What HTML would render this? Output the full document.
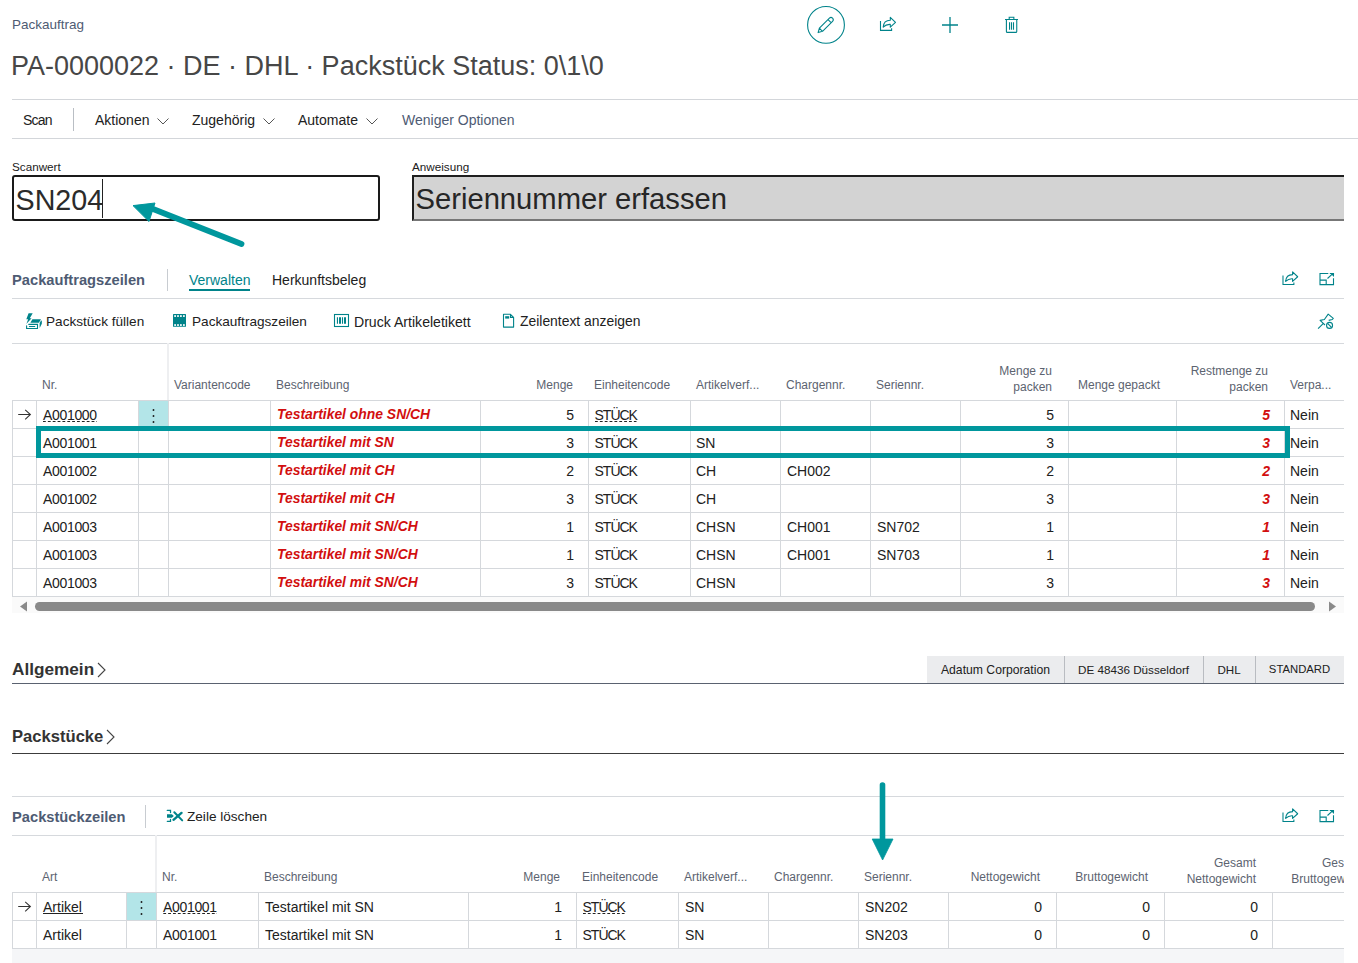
<!DOCTYPE html>
<html><head><meta charset="utf-8"><title>Packauftrag</title>
<style>
html,body{margin:0;padding:0;}
body{width:1358px;height:963px;position:relative;overflow:hidden;background:#fff;font-family:"Liberation Sans",sans-serif;}
.t{position:absolute;white-space:nowrap;}
.r{position:absolute;}
</style></head><body>
<div class="t" style="left:12px;top:17.57px;font-size:13.5px;line-height:13.5px;font-weight:400;color:#4e5b73;font-style:normal;">Packauftrag</div>
<div class="t" style="left:11px;top:53.14px;font-size:27px;line-height:27px;font-weight:400;color:#474747;font-style:normal;">PA-0000022 · DE · DHL · Packstück Status: 0\1\0</div>
<div class="r" style="left:12px;top:99px;width:1346px;height:1px;background:#d3d6da"></div>
<div class="r" style="left:12px;top:138px;width:1346px;height:1px;background:#d3d6da"></div>
<div class="t" style="left:23px;top:113.15px;font-size:14px;line-height:14px;font-weight:400;color:#212121;font-style:normal;letter-spacing:-0.8px;">Scan</div>
<div class="r" style="left:73px;top:108px;width:1px;height:23px;background:#b9bec4"></div>
<div class="t" style="left:95px;top:113.15px;font-size:14px;line-height:14px;font-weight:400;color:#212121;font-style:normal;">Aktionen</div>
<svg class="r" style="left:157px;top:118px;" width="12" height="7" viewBox="0 0 12 7"><path d="M0.5 0.5 L6 6 L11.5 0.5" fill="none" stroke="#555" stroke-width="1"/></svg>
<div class="t" style="left:192px;top:113.15px;font-size:14px;line-height:14px;font-weight:400;color:#212121;font-style:normal;">Zugehörig</div>
<svg class="r" style="left:262.5px;top:118px;" width="12" height="7" viewBox="0 0 12 7"><path d="M0.5 0.5 L6 6 L11.5 0.5" fill="none" stroke="#555" stroke-width="1"/></svg>
<div class="t" style="left:298px;top:113.15px;font-size:14px;line-height:14px;font-weight:400;color:#212121;font-style:normal;">Automate</div>
<svg class="r" style="left:366px;top:118px;" width="12" height="7" viewBox="0 0 12 7"><path d="M0.5 0.5 L6 6 L11.5 0.5" fill="none" stroke="#555" stroke-width="1"/></svg>
<div class="t" style="left:402px;top:113.15px;font-size:14px;line-height:14px;font-weight:400;color:#4e5b73;font-style:normal;">Weniger Optionen</div>
<div class="t" style="left:12px;top:161.10px;font-size:11.7px;line-height:11.7px;font-weight:400;color:#212121;font-style:normal;">Scanwert</div>
<div class="r" style="left:12px;top:175px;width:368px;height:46px;box-sizing:border-box;border:2px solid #1a1a1a;border-radius:3px;background:#fff"></div>
<div class="t" style="left:15.5px;top:185.51px;font-size:28.7px;line-height:28.7px;font-weight:400;color:#2b2b2b;font-style:normal;">SN204</div>
<div class="r" style="left:102px;top:179px;width:1px;height:39px;background:#222"></div>
<div class="t" style="left:412px;top:161.10px;font-size:11.7px;line-height:11.7px;font-weight:400;color:#212121;font-style:normal;">Anweisung</div>
<div class="r" style="left:412px;top:175px;width:932px;height:46px;box-sizing:border-box;border-top:2px solid #1f1f1f;border-left:2px solid #1f1f1f;border-bottom:2px solid #777;background:#d3d3d3"></div>
<div class="t" style="left:415.5px;top:185.08px;font-size:29.2px;line-height:29.2px;font-weight:400;color:#262626;font-style:normal;">Seriennummer erfassen</div>
<div class="t" style="left:12px;top:272.56px;font-size:14.7px;line-height:14.7px;font-weight:700;color:#4e5b73;font-style:normal;">Packauftragszeilen</div>
<div class="r" style="left:167px;top:269px;width:1px;height:22px;background:#c8ccd1"></div>
<div class="t" style="left:189px;top:273.15px;font-size:14px;line-height:14px;font-weight:400;color:#00838a;font-style:normal;">Verwalten</div>
<div class="r" style="left:189px;top:289px;width:61px;height:2px;background:#00838a"></div>
<div class="t" style="left:272px;top:273.15px;font-size:14px;line-height:14px;font-weight:400;color:#212121;font-style:normal;">Herkunftsbeleg</div>
<div class="r" style="left:12px;top:298px;width:1332px;height:1px;background:#d6d9dd"></div>
<div class="t" style="left:46px;top:315.49px;font-size:13.6px;line-height:13.6px;font-weight:400;color:#212121;font-style:normal;">Packstück füllen</div>
<div class="t" style="left:192px;top:315.49px;font-size:13.6px;line-height:13.6px;font-weight:400;color:#212121;font-style:normal;">Packauftragszeilen</div>
<div class="t" style="left:354px;top:315.06px;font-size:14.1px;line-height:14.1px;font-weight:400;color:#212121;font-style:normal;">Druck Artikeletikett</div>
<div class="t" style="left:520px;top:315.23px;font-size:13.9px;line-height:13.9px;font-weight:400;color:#212121;font-style:normal;">Zeilentext anzeigen</div>
<div class="r" style="left:12px;top:343px;width:1332px;height:1px;background:#d6d9dd"></div>
<div class="r" style="left:167px;top:343px;width:2px;height:57px;background:#eeeff1"></div>
<div class="r" style="left:12px;top:400px;width:1332px;height:1px;background:#d5d8dc"></div>
<div class="r" style="left:12px;top:428px;width:1332px;height:1px;background:#d5d8dc"></div>
<div class="r" style="left:12px;top:456px;width:1332px;height:1px;background:#d5d8dc"></div>
<div class="r" style="left:12px;top:484px;width:1332px;height:1px;background:#d5d8dc"></div>
<div class="r" style="left:12px;top:512px;width:1332px;height:1px;background:#d5d8dc"></div>
<div class="r" style="left:12px;top:540px;width:1332px;height:1px;background:#d5d8dc"></div>
<div class="r" style="left:12px;top:568px;width:1332px;height:1px;background:#d5d8dc"></div>
<div class="r" style="left:12px;top:596px;width:1332px;height:1px;background:#d5d8dc"></div>
<div class="r" style="left:12px;top:400px;width:1px;height:196px;background:#d5d8dc"></div>
<div class="r" style="left:36px;top:400px;width:1px;height:196px;background:#d5d8dc"></div>
<div class="r" style="left:138px;top:400px;width:1px;height:196px;background:#d5d8dc"></div>
<div class="r" style="left:168px;top:400px;width:1px;height:196px;background:#d5d8dc"></div>
<div class="r" style="left:270px;top:400px;width:1px;height:196px;background:#d5d8dc"></div>
<div class="r" style="left:480px;top:400px;width:1px;height:196px;background:#d5d8dc"></div>
<div class="r" style="left:588px;top:400px;width:1px;height:196px;background:#d5d8dc"></div>
<div class="r" style="left:690px;top:400px;width:1px;height:196px;background:#d5d8dc"></div>
<div class="r" style="left:780px;top:400px;width:1px;height:196px;background:#d5d8dc"></div>
<div class="r" style="left:870px;top:400px;width:1px;height:196px;background:#d5d8dc"></div>
<div class="r" style="left:960px;top:400px;width:1px;height:196px;background:#d5d8dc"></div>
<div class="r" style="left:1068px;top:400px;width:1px;height:196px;background:#d5d8dc"></div>
<div class="r" style="left:1176px;top:400px;width:1px;height:196px;background:#d5d8dc"></div>
<div class="r" style="left:1284px;top:400px;width:1px;height:196px;background:#d5d8dc"></div>
<div class="t" style="left:42px;top:378.84px;font-size:12px;line-height:12px;font-weight:400;color:#5c6370;font-style:normal;">Nr.</div>
<div class="t" style="left:174px;top:378.84px;font-size:12px;line-height:12px;font-weight:400;color:#5c6370;font-style:normal;">Variantencode</div>
<div class="t" style="left:276px;top:378.84px;font-size:12px;line-height:12px;font-weight:400;color:#5c6370;font-style:normal;">Beschreibung</div>
<div class="t" style="right:785px;top:378.84px;font-size:12px;line-height:12px;font-weight:400;color:#5c6370;font-style:normal;text-align:right;">Menge</div>
<div class="t" style="left:594px;top:378.84px;font-size:12px;line-height:12px;font-weight:400;color:#5c6370;font-style:normal;">Einheitencode</div>
<div class="t" style="left:696px;top:378.84px;font-size:12px;line-height:12px;font-weight:400;color:#5c6370;font-style:normal;">Artikelverf...</div>
<div class="t" style="left:786px;top:378.84px;font-size:12px;line-height:12px;font-weight:400;color:#5c6370;font-style:normal;">Chargennr.</div>
<div class="t" style="left:876px;top:378.84px;font-size:12px;line-height:12px;font-weight:400;color:#5c6370;font-style:normal;">Seriennr.</div>
<div class="t" style="right:306px;top:364.84px;font-size:12px;line-height:12px;font-weight:400;color:#5c6370;font-style:normal;text-align:right;">Menge zu</div>
<div class="t" style="right:306px;top:380.84px;font-size:12px;line-height:12px;font-weight:400;color:#5c6370;font-style:normal;text-align:right;">packen</div>
<div class="t" style="left:1078px;top:378.84px;font-size:12px;line-height:12px;font-weight:400;color:#5c6370;font-style:normal;">Menge gepackt</div>
<div class="t" style="right:90px;top:364.84px;font-size:12px;line-height:12px;font-weight:400;color:#5c6370;font-style:normal;text-align:right;">Restmenge zu</div>
<div class="t" style="right:90px;top:380.84px;font-size:12px;line-height:12px;font-weight:400;color:#5c6370;font-style:normal;text-align:right;">packen</div>
<div class="t" style="left:1290px;top:378.84px;font-size:12px;line-height:12px;font-weight:400;color:#5c6370;font-style:normal;">Verpa...</div>
<div class="r" style="left:139px;top:401px;width:29px;height:27px;background:#b3e5e8"></div>
<div class="t" style="left:43px;top:408.15px;font-size:14px;line-height:14px;font-weight:400;color:#212121;font-style:normal;letter-spacing:-0.33px;">A001000</div>
<div class="t" style="left:277px;top:408.23px;font-size:13.9px;line-height:13.9px;font-weight:700;color:#d20f0f;font-style:italic;">Testartikel ohne SN/CH</div>
<div class="t" style="right:784px;top:408.15px;font-size:14px;line-height:14px;font-weight:400;color:#212121;font-style:normal;text-align:right;">5</div>
<div class="t" style="left:594.5px;top:408.15px;font-size:14px;line-height:14px;font-weight:400;color:#212121;font-style:normal;letter-spacing:-1px;">STÜCK</div>
<div class="t" style="right:304px;top:408.15px;font-size:14px;line-height:14px;font-weight:400;color:#212121;font-style:normal;text-align:right;">5</div>
<div class="t" style="right:88px;top:408.15px;font-size:14px;line-height:14px;font-weight:700;color:#d20f0f;font-style:italic;text-align:right;">5</div>
<div class="t" style="left:1290px;top:408.15px;font-size:14px;line-height:14px;font-weight:400;color:#212121;font-style:normal;">Nein</div>
<div class="t" style="left:43px;top:436.15px;font-size:14px;line-height:14px;font-weight:400;color:#212121;font-style:normal;letter-spacing:-0.33px;">A001001</div>
<div class="t" style="left:277px;top:436.23px;font-size:13.9px;line-height:13.9px;font-weight:700;color:#d20f0f;font-style:italic;">Testartikel mit SN</div>
<div class="t" style="right:784px;top:436.15px;font-size:14px;line-height:14px;font-weight:400;color:#212121;font-style:normal;text-align:right;">3</div>
<div class="t" style="left:594.5px;top:436.15px;font-size:14px;line-height:14px;font-weight:400;color:#212121;font-style:normal;letter-spacing:-1px;">STÜCK</div>
<div class="t" style="left:696px;top:436.15px;font-size:14px;line-height:14px;font-weight:400;color:#212121;font-style:normal;">SN</div>
<div class="t" style="right:304px;top:436.15px;font-size:14px;line-height:14px;font-weight:400;color:#212121;font-style:normal;text-align:right;">3</div>
<div class="t" style="right:88px;top:436.15px;font-size:14px;line-height:14px;font-weight:700;color:#d20f0f;font-style:italic;text-align:right;">3</div>
<div class="t" style="left:1290px;top:436.15px;font-size:14px;line-height:14px;font-weight:400;color:#212121;font-style:normal;">Nein</div>
<div class="t" style="left:43px;top:464.15px;font-size:14px;line-height:14px;font-weight:400;color:#212121;font-style:normal;letter-spacing:-0.33px;">A001002</div>
<div class="t" style="left:277px;top:464.23px;font-size:13.9px;line-height:13.9px;font-weight:700;color:#d20f0f;font-style:italic;">Testartikel mit CH</div>
<div class="t" style="right:784px;top:464.15px;font-size:14px;line-height:14px;font-weight:400;color:#212121;font-style:normal;text-align:right;">2</div>
<div class="t" style="left:594.5px;top:464.15px;font-size:14px;line-height:14px;font-weight:400;color:#212121;font-style:normal;letter-spacing:-1px;">STÜCK</div>
<div class="t" style="left:696px;top:464.15px;font-size:14px;line-height:14px;font-weight:400;color:#212121;font-style:normal;">CH</div>
<div class="t" style="left:787px;top:464.15px;font-size:14px;line-height:14px;font-weight:400;color:#212121;font-style:normal;">CH002</div>
<div class="t" style="right:304px;top:464.15px;font-size:14px;line-height:14px;font-weight:400;color:#212121;font-style:normal;text-align:right;">2</div>
<div class="t" style="right:88px;top:464.15px;font-size:14px;line-height:14px;font-weight:700;color:#d20f0f;font-style:italic;text-align:right;">2</div>
<div class="t" style="left:1290px;top:464.15px;font-size:14px;line-height:14px;font-weight:400;color:#212121;font-style:normal;">Nein</div>
<div class="t" style="left:43px;top:492.15px;font-size:14px;line-height:14px;font-weight:400;color:#212121;font-style:normal;letter-spacing:-0.33px;">A001002</div>
<div class="t" style="left:277px;top:492.23px;font-size:13.9px;line-height:13.9px;font-weight:700;color:#d20f0f;font-style:italic;">Testartikel mit CH</div>
<div class="t" style="right:784px;top:492.15px;font-size:14px;line-height:14px;font-weight:400;color:#212121;font-style:normal;text-align:right;">3</div>
<div class="t" style="left:594.5px;top:492.15px;font-size:14px;line-height:14px;font-weight:400;color:#212121;font-style:normal;letter-spacing:-1px;">STÜCK</div>
<div class="t" style="left:696px;top:492.15px;font-size:14px;line-height:14px;font-weight:400;color:#212121;font-style:normal;">CH</div>
<div class="t" style="right:304px;top:492.15px;font-size:14px;line-height:14px;font-weight:400;color:#212121;font-style:normal;text-align:right;">3</div>
<div class="t" style="right:88px;top:492.15px;font-size:14px;line-height:14px;font-weight:700;color:#d20f0f;font-style:italic;text-align:right;">3</div>
<div class="t" style="left:1290px;top:492.15px;font-size:14px;line-height:14px;font-weight:400;color:#212121;font-style:normal;">Nein</div>
<div class="t" style="left:43px;top:520.15px;font-size:14px;line-height:14px;font-weight:400;color:#212121;font-style:normal;letter-spacing:-0.33px;">A001003</div>
<div class="t" style="left:277px;top:520.23px;font-size:13.9px;line-height:13.9px;font-weight:700;color:#d20f0f;font-style:italic;">Testartikel mit SN/CH</div>
<div class="t" style="right:784px;top:520.15px;font-size:14px;line-height:14px;font-weight:400;color:#212121;font-style:normal;text-align:right;">1</div>
<div class="t" style="left:594.5px;top:520.15px;font-size:14px;line-height:14px;font-weight:400;color:#212121;font-style:normal;letter-spacing:-1px;">STÜCK</div>
<div class="t" style="left:696px;top:520.15px;font-size:14px;line-height:14px;font-weight:400;color:#212121;font-style:normal;">CHSN</div>
<div class="t" style="left:787px;top:520.15px;font-size:14px;line-height:14px;font-weight:400;color:#212121;font-style:normal;">CH001</div>
<div class="t" style="left:877px;top:520.15px;font-size:14px;line-height:14px;font-weight:400;color:#212121;font-style:normal;">SN702</div>
<div class="t" style="right:304px;top:520.15px;font-size:14px;line-height:14px;font-weight:400;color:#212121;font-style:normal;text-align:right;">1</div>
<div class="t" style="right:88px;top:520.15px;font-size:14px;line-height:14px;font-weight:700;color:#d20f0f;font-style:italic;text-align:right;">1</div>
<div class="t" style="left:1290px;top:520.15px;font-size:14px;line-height:14px;font-weight:400;color:#212121;font-style:normal;">Nein</div>
<div class="t" style="left:43px;top:548.15px;font-size:14px;line-height:14px;font-weight:400;color:#212121;font-style:normal;letter-spacing:-0.33px;">A001003</div>
<div class="t" style="left:277px;top:548.23px;font-size:13.9px;line-height:13.9px;font-weight:700;color:#d20f0f;font-style:italic;">Testartikel mit SN/CH</div>
<div class="t" style="right:784px;top:548.15px;font-size:14px;line-height:14px;font-weight:400;color:#212121;font-style:normal;text-align:right;">1</div>
<div class="t" style="left:594.5px;top:548.15px;font-size:14px;line-height:14px;font-weight:400;color:#212121;font-style:normal;letter-spacing:-1px;">STÜCK</div>
<div class="t" style="left:696px;top:548.15px;font-size:14px;line-height:14px;font-weight:400;color:#212121;font-style:normal;">CHSN</div>
<div class="t" style="left:787px;top:548.15px;font-size:14px;line-height:14px;font-weight:400;color:#212121;font-style:normal;">CH001</div>
<div class="t" style="left:877px;top:548.15px;font-size:14px;line-height:14px;font-weight:400;color:#212121;font-style:normal;">SN703</div>
<div class="t" style="right:304px;top:548.15px;font-size:14px;line-height:14px;font-weight:400;color:#212121;font-style:normal;text-align:right;">1</div>
<div class="t" style="right:88px;top:548.15px;font-size:14px;line-height:14px;font-weight:700;color:#d20f0f;font-style:italic;text-align:right;">1</div>
<div class="t" style="left:1290px;top:548.15px;font-size:14px;line-height:14px;font-weight:400;color:#212121;font-style:normal;">Nein</div>
<div class="t" style="left:43px;top:576.15px;font-size:14px;line-height:14px;font-weight:400;color:#212121;font-style:normal;letter-spacing:-0.33px;">A001003</div>
<div class="t" style="left:277px;top:576.23px;font-size:13.9px;line-height:13.9px;font-weight:700;color:#d20f0f;font-style:italic;">Testartikel mit SN/CH</div>
<div class="t" style="right:784px;top:576.15px;font-size:14px;line-height:14px;font-weight:400;color:#212121;font-style:normal;text-align:right;">3</div>
<div class="t" style="left:594.5px;top:576.15px;font-size:14px;line-height:14px;font-weight:400;color:#212121;font-style:normal;letter-spacing:-1px;">STÜCK</div>
<div class="t" style="left:696px;top:576.15px;font-size:14px;line-height:14px;font-weight:400;color:#212121;font-style:normal;">CHSN</div>
<div class="t" style="right:304px;top:576.15px;font-size:14px;line-height:14px;font-weight:400;color:#212121;font-style:normal;text-align:right;">3</div>
<div class="t" style="right:88px;top:576.15px;font-size:14px;line-height:14px;font-weight:700;color:#d20f0f;font-style:italic;text-align:right;">3</div>
<div class="t" style="left:1290px;top:576.15px;font-size:14px;line-height:14px;font-weight:400;color:#212121;font-style:normal;">Nein</div>
<div class="r" style="left:36px;top:426px;width:1254px;height:32px;box-sizing:border-box;border:5px solid #00979d"></div>
<div class="r" style="left:12px;top:597px;width:1332px;height:16px;background:#fafafa"></div>
<svg class="r" style="left:19px;top:601px;" width="9" height="11" viewBox="0 0 9 11"><path d="M8 0.5 V10.5 L1 5.5 Z" fill="#8a8a8a"/></svg>
<div class="r" style="left:35px;top:602px;width:1280px;height:9px;background:#898989;border-radius:4.5px"></div>
<svg class="r" style="left:1328px;top:601px;" width="9" height="11" viewBox="0 0 9 11"><path d="M1 0.5 V10.5 L8 5.5 Z" fill="#8a8a8a"/></svg>
<div class="t" style="left:12px;top:661.44px;font-size:17.2px;line-height:17.2px;font-weight:700;color:#333;font-style:normal;">Allgemein</div>
<svg class="r" style="left:96px;top:662px;" width="12" height="16" viewBox="0 0 12 16"><path d="M2 1 L9 8 L2 15" fill="none" stroke="#444" stroke-width="1.1"/></svg>
<div class="r" style="left:12px;top:683px;width:1332px;height:1px;background:#5a6270"></div>
<div class="r" style="left:927px;top:656px;width:417px;height:27px;background:#ebecee"></div>
<div class="r" style="left:1064px;top:656px;width:1px;height:27px;background:#b9bcc1"></div>
<div class="r" style="left:1203px;top:656px;width:1px;height:27px;background:#b9bcc1"></div>
<div class="r" style="left:1255px;top:656px;width:1px;height:27px;background:#b9bcc1"></div>
<div class="t" style="left:927px;width:137px;top:663.67px;font-size:12.2px;line-height:12.2px;color:#212121;text-align:center">Adatum Corporation</div>
<div class="t" style="left:1064px;width:139px;top:664.10px;font-size:11.7px;line-height:11.7px;color:#212121;text-align:center">DE 48436 Düsseldorf</div>
<div class="t" style="left:1203px;width:52px;top:664.18px;font-size:11.6px;line-height:11.6px;color:#212121;text-align:center">DHL</div>
<div class="t" style="left:1255px;width:89px;top:664.43px;font-size:11.3px;line-height:11.3px;color:#212121;text-align:center">STANDARD</div>
<div class="t" style="left:12px;top:728.95px;font-size:16.6px;line-height:16.6px;font-weight:700;color:#333;font-style:normal;">Packstücke</div>
<svg class="r" style="left:104.5px;top:729px;" width="12" height="16" viewBox="0 0 12 16"><path d="M2 1 L9 8 L2 15" fill="none" stroke="#444" stroke-width="1.1"/></svg>
<div class="r" style="left:12px;top:753px;width:1332px;height:1px;background:#3c3c3c"></div>
<div class="r" style="left:12px;top:796px;width:1332px;height:1px;background:#d6d9dd"></div>
<div class="t" style="left:12px;top:809.56px;font-size:14.7px;line-height:14.7px;font-weight:700;color:#4e5b73;font-style:normal;">Packstückzeilen</div>
<div class="r" style="left:145px;top:805px;width:1px;height:23px;background:#c8ccd1"></div>
<div class="t" style="left:187px;top:810.49px;font-size:13.6px;line-height:13.6px;font-weight:400;color:#212121;font-style:normal;">Zeile löschen</div>
<div class="r" style="left:12px;top:835px;width:1332px;height:1px;background:#d6d9dd"></div>
<div class="r" style="left:155px;top:835px;width:2px;height:57px;background:#eeeff1"></div>
<div class="r" style="left:12px;top:892px;width:1332px;height:1px;background:#d5d8dc"></div>
<div class="r" style="left:12px;top:920px;width:1332px;height:1px;background:#d5d8dc"></div>
<div class="r" style="left:12px;top:948px;width:1332px;height:1px;background:#d5d8dc"></div>
<div class="r" style="left:12px;top:892px;width:1px;height:56px;background:#d5d8dc"></div>
<div class="r" style="left:36px;top:892px;width:1px;height:56px;background:#d5d8dc"></div>
<div class="r" style="left:126px;top:892px;width:1px;height:56px;background:#d5d8dc"></div>
<div class="r" style="left:156px;top:892px;width:1px;height:56px;background:#d5d8dc"></div>
<div class="r" style="left:258px;top:892px;width:1px;height:56px;background:#d5d8dc"></div>
<div class="r" style="left:468px;top:892px;width:1px;height:56px;background:#d5d8dc"></div>
<div class="r" style="left:576px;top:892px;width:1px;height:56px;background:#d5d8dc"></div>
<div class="r" style="left:678px;top:892px;width:1px;height:56px;background:#d5d8dc"></div>
<div class="r" style="left:768px;top:892px;width:1px;height:56px;background:#d5d8dc"></div>
<div class="r" style="left:858px;top:892px;width:1px;height:56px;background:#d5d8dc"></div>
<div class="r" style="left:948px;top:892px;width:1px;height:56px;background:#d5d8dc"></div>
<div class="r" style="left:1056px;top:892px;width:1px;height:56px;background:#d5d8dc"></div>
<div class="r" style="left:1164px;top:892px;width:1px;height:56px;background:#d5d8dc"></div>
<div class="r" style="left:1272px;top:892px;width:1px;height:56px;background:#d5d8dc"></div>
<div class="t" style="left:42px;top:870.84px;font-size:12px;line-height:12px;font-weight:400;color:#5c6370;font-style:normal;">Art</div>
<div class="t" style="left:162px;top:870.84px;font-size:12px;line-height:12px;font-weight:400;color:#5c6370;font-style:normal;">Nr.</div>
<div class="t" style="left:264px;top:870.84px;font-size:12px;line-height:12px;font-weight:400;color:#5c6370;font-style:normal;">Beschreibung</div>
<div class="t" style="right:798px;top:870.84px;font-size:12px;line-height:12px;font-weight:400;color:#5c6370;font-style:normal;text-align:right;">Menge</div>
<div class="t" style="left:582px;top:870.84px;font-size:12px;line-height:12px;font-weight:400;color:#5c6370;font-style:normal;">Einheitencode</div>
<div class="t" style="left:684px;top:870.84px;font-size:12px;line-height:12px;font-weight:400;color:#5c6370;font-style:normal;">Artikelverf...</div>
<div class="t" style="left:774px;top:870.84px;font-size:12px;line-height:12px;font-weight:400;color:#5c6370;font-style:normal;">Chargennr.</div>
<div class="t" style="left:864px;top:870.84px;font-size:12px;line-height:12px;font-weight:400;color:#5c6370;font-style:normal;">Seriennr.</div>
<div class="t" style="right:318px;top:870.84px;font-size:12px;line-height:12px;font-weight:400;color:#5c6370;font-style:normal;text-align:right;">Nettogewicht</div>
<div class="t" style="right:210px;top:870.84px;font-size:12px;line-height:12px;font-weight:400;color:#5c6370;font-style:normal;text-align:right;">Bruttogewicht</div>
<div class="t" style="right:102px;top:856.84px;font-size:12px;line-height:12px;font-weight:400;color:#5c6370;font-style:normal;text-align:right;">Gesamt</div>
<div class="t" style="right:102px;top:872.84px;font-size:12px;line-height:12px;font-weight:400;color:#5c6370;font-style:normal;text-align:right;">Nettogewicht</div>
<div class="r" style="left:1272px;top:840px;width:72px;height:60px;overflow:hidden">
<div class="t" style="left:0;width:92px;top:16.84px;font-size:12px;line-height:12px;color:#5c6370;text-align:right">Gesamt</div>
<div class="t" style="left:0;width:92px;top:32.84px;font-size:12px;line-height:12px;color:#5c6370;text-align:right">Bruttogewicht</div>
</div>
<div class="r" style="left:127px;top:893px;width:29px;height:27px;background:#b3e5e8"></div>
<div class="t" style="left:43px;top:900.15px;font-size:14px;line-height:14px;font-weight:400;color:#212121;font-style:normal;">Artikel</div>
<div class="t" style="left:163px;top:900.15px;font-size:14px;line-height:14px;font-weight:400;color:#212121;font-style:normal;letter-spacing:-0.33px;">A001001</div>
<div class="t" style="left:265px;top:900.15px;font-size:14px;line-height:14px;font-weight:400;color:#212121;font-style:normal;">Testartikel mit SN</div>
<div class="t" style="right:796px;top:900.15px;font-size:14px;line-height:14px;font-weight:400;color:#212121;font-style:normal;text-align:right;">1</div>
<div class="t" style="left:582.5px;top:900.15px;font-size:14px;line-height:14px;font-weight:400;color:#212121;font-style:normal;letter-spacing:-1px;">STÜCK</div>
<div class="t" style="left:685px;top:900.15px;font-size:14px;line-height:14px;font-weight:400;color:#212121;font-style:normal;">SN</div>
<div class="t" style="left:865px;top:900.15px;font-size:14px;line-height:14px;font-weight:400;color:#212121;font-style:normal;">SN202</div>
<div class="t" style="right:316px;top:900.15px;font-size:14px;line-height:14px;font-weight:400;color:#212121;font-style:normal;text-align:right;">0</div>
<div class="t" style="right:208px;top:900.15px;font-size:14px;line-height:14px;font-weight:400;color:#212121;font-style:normal;text-align:right;">0</div>
<div class="t" style="right:100px;top:900.15px;font-size:14px;line-height:14px;font-weight:400;color:#212121;font-style:normal;text-align:right;">0</div>
<div class="t" style="left:43px;top:928.15px;font-size:14px;line-height:14px;font-weight:400;color:#212121;font-style:normal;">Artikel</div>
<div class="t" style="left:163px;top:928.15px;font-size:14px;line-height:14px;font-weight:400;color:#212121;font-style:normal;letter-spacing:-0.33px;">A001001</div>
<div class="t" style="left:265px;top:928.15px;font-size:14px;line-height:14px;font-weight:400;color:#212121;font-style:normal;">Testartikel mit SN</div>
<div class="t" style="right:796px;top:928.15px;font-size:14px;line-height:14px;font-weight:400;color:#212121;font-style:normal;text-align:right;">1</div>
<div class="t" style="left:582.5px;top:928.15px;font-size:14px;line-height:14px;font-weight:400;color:#212121;font-style:normal;letter-spacing:-1px;">STÜCK</div>
<div class="t" style="left:685px;top:928.15px;font-size:14px;line-height:14px;font-weight:400;color:#212121;font-style:normal;">SN</div>
<div class="t" style="left:865px;top:928.15px;font-size:14px;line-height:14px;font-weight:400;color:#212121;font-style:normal;">SN203</div>
<div class="t" style="right:316px;top:928.15px;font-size:14px;line-height:14px;font-weight:400;color:#212121;font-style:normal;text-align:right;">0</div>
<div class="t" style="right:208px;top:928.15px;font-size:14px;line-height:14px;font-weight:400;color:#212121;font-style:normal;text-align:right;">0</div>
<div class="t" style="right:100px;top:928.15px;font-size:14px;line-height:14px;font-weight:400;color:#212121;font-style:normal;text-align:right;">0</div>
<div class="r" style="left:12px;top:949px;width:1332px;height:14px;background:#f5f6f8"></div>
<svg class="r" style="left:0;top:0" width="1358" height="963" viewBox="0 0 1358 963"><circle cx="826" cy="24.9" r="18.4" fill="none" stroke="#00838a" stroke-width="1.1"/><g transform="translate(825.4 25.3) rotate(-45)"><path d="M-10.3 0 L-6.3 -2.2 H7.9 A2.2 2.2 0 0 1 7.9 2.2 H-6.3 Z M-6.3 -2.2 V2.2 M5.9 -2.2 V2.2" fill="none" stroke="#00838a" stroke-width="1.1" stroke-linejoin="round"/></g><g transform="translate(880 17) scale(1.0)"><path d="M0.5 4 V13.35 H11.6 V11.3" fill="none" stroke="#00838a" stroke-width="1.1"/><path d="M3.2 10.15 C3.5 5.5 6.5 3.2 10.3 3.2 V0.4 L15.5 5.35 L10.3 10.15 V7.4 C7.5 7.2 5 8.3 3.2 10.15 Z" fill="none" stroke="#00838a" stroke-width="1.1" stroke-linejoin="round"/></g><path d="M950 17 V33 M942 25 H958" stroke="#00838a" stroke-width="1.3"/><path d="M1005 19.45 H1018 M1009.2 19.45 V17.3 H1013.85 V19.45 M1006.4 19.45 V31.4 Q1006.4 32.4 1007.4 32.4 H1015.75 Q1016.75 32.4 1016.75 31.4 V19.45 M1009.55 22.2 V29.8 M1011.5 22.2 V29.8 M1013.5 22.2 V29.8" fill="none" stroke="#00838a" stroke-width="1.1"/><path d="M241.5 244 L148 207" stroke="#00979d" stroke-width="5.8" stroke-linecap="round"/><path d="M133 205.6 L155 203 L149 221.5 Z" fill="#00979d" stroke="#00979d" stroke-width="1" stroke-linejoin="round"/><g transform="translate(1282.5 271.5) scale(0.98)"><path d="M0.5 4 V13.35 H11.6 V11.3" fill="none" stroke="#00838a" stroke-width="1.1"/><path d="M3.2 10.15 C3.5 5.5 6.5 3.2 10.3 3.2 V0.4 L15.5 5.35 L10.3 10.15 V7.4 C7.5 7.2 5 8.3 3.2 10.15 Z" fill="none" stroke="#00838a" stroke-width="1.1" stroke-linejoin="round"/></g><path d="M1319.5 273.5 H1328.3 M1329.8 273.5 H1333.5 V275.2 M1333.5 278.2 V284.6 H1320.0 V273.0 M1320.0 280.1 H1326.2 V284.6 M1327.5 278.5 L1332.5 273.8" fill="none" stroke="#00838a" stroke-width="1.1"/><path d="M1330.0 273.0 H1334.0 V277.0 Z" fill="#00838a"/><path d="M28.6 313.3 H32.7 L29.8 318.2 H31.6 L26.3 323.9 L28.2 319.3 H26.3 Z" fill="#00838a"/><path d="M32.4 319.2 H41 L38.9 322.7 H30.4 Z" fill="#00838a"/><path d="M41.3 320.2 Q42.3 321 41.8 323.8 L39.6 328.3 V323 Z" fill="#00838a"/><path d="M26.6 325.8 V328.5 H37.5 V324.4 H28.8 M29.4 326.5 H34.8" fill="none" stroke="#00838a" stroke-width="1.1" stroke-linecap="round"/><rect x="173" y="314" width="13" height="12.8" rx="0.5" fill="#00838a"/><rect x="174.2" y="315.2" width="1.8" height="1.7" fill="#fff"/><rect x="174.2" y="324.2" width="1.8" height="1.7" fill="#fff"/><rect x="177.1" y="315.2" width="1.8" height="1.7" fill="#fff"/><rect x="177.1" y="324.2" width="1.8" height="1.7" fill="#fff"/><rect x="180.0" y="315.2" width="1.8" height="1.7" fill="#fff"/><rect x="180.0" y="324.2" width="1.8" height="1.7" fill="#fff"/><rect x="183.0" y="315.2" width="1.8" height="1.7" fill="#fff"/><rect x="183.0" y="324.2" width="1.8" height="1.7" fill="#fff"/><rect x="334.5" y="314.5" width="14" height="12" fill="none" stroke="#00838a" stroke-width="1.1"/><path d="M337.45 317.2 V323.7 M342.5 317.2 V323.7" stroke="#00838a" stroke-width="1.1"/><path d="M340 317.2 V323.7 M345 317.2 V323.7" stroke="#00838a" stroke-width="2"/><path d="M503.5 314.3 H510.5 L513.6 317.4 V327.1 H503.5 Z M510.5 314.3 V317.4 H513.6" fill="none" stroke="#00838a" stroke-width="1.1" stroke-linejoin="round"/><rect x="505.2" y="316.2" width="4" height="2.4" fill="#00838a"/><path d="M1318.1 328.65 L1322.9 323.8 M1325 325 L1320.1 320.4 L1324.4 319.5 L1328.2 314.1 L1333.3 318.4 L1332.3 319.5 L1328.7 320.4" fill="none" stroke="#00838a" stroke-width="1.1" stroke-linejoin="round"/><circle cx="1329.55" cy="325.4" r="3" fill="none" stroke="#00838a" stroke-width="1.1"/><path d="M1327.6 323.4 L1331.5 327.4" stroke="#00838a" stroke-width="1.1"/><circle cx="153.5" cy="410" r="0.95" fill="#1a1a1a"/><circle cx="153.5" cy="416" r="0.95" fill="#1a1a1a"/><circle cx="153.5" cy="422" r="0.95" fill="#1a1a1a"/><path d="M18.2 414.5 H30.6 M25.2 409.8 L30.4 414.5 L25.2 419.3" fill="none" stroke="#333" stroke-width="1.05"/><path d="M43 421.5 H97" stroke="#222" stroke-width="1.1" stroke-dasharray="2.8 2.06"/><path d="M595 421.5 H636.5" stroke="#222" stroke-width="1.1" stroke-dasharray="2.8 2.06"/><path d="M167.3 810.4 H170.5 V812.5 M170.5 819.4 V821.3 H167.3" fill="none" stroke="#00838a" stroke-width="1.3" stroke-linecap="round"/><path d="M167 814.2 H171.9 L173.8 816 L171.9 817.7 H167 Z" fill="#00838a"/><path d="M174.3 812.3 L182.2 820.4" stroke="#00838a" stroke-width="2" stroke-linecap="round"/><path d="M181.5 812.9 L173.5 819.8" stroke="#00838a" stroke-width="2.4" stroke-linecap="round"/><g transform="translate(1282.5 808.5) scale(0.98)"><path d="M0.5 4 V13.35 H11.6 V11.3" fill="none" stroke="#00838a" stroke-width="1.1"/><path d="M3.2 10.15 C3.5 5.5 6.5 3.2 10.3 3.2 V0.4 L15.5 5.35 L10.3 10.15 V7.4 C7.5 7.2 5 8.3 3.2 10.15 Z" fill="none" stroke="#00838a" stroke-width="1.1" stroke-linejoin="round"/></g><path d="M1319.5 810.5 H1328.3 M1329.8 810.5 H1333.5 V812.2 M1333.5 815.2 V821.6 H1320.0 V810.0 M1320.0 817.1 H1326.2 V821.6 M1327.5 815.5 L1332.5 810.8" fill="none" stroke="#00838a" stroke-width="1.1"/><path d="M1330.0 810.0 H1334.0 V814.0 Z" fill="#00838a"/><circle cx="141.5" cy="902" r="0.95" fill="#1a1a1a"/><circle cx="141.5" cy="908" r="0.95" fill="#1a1a1a"/><circle cx="141.5" cy="914" r="0.95" fill="#1a1a1a"/><path d="M18.2 906.5 H30.6 M25.2 901.8 L30.4 906.5 L25.2 911.3" fill="none" stroke="#333" stroke-width="1.05"/><path d="M163.3 913.5 H217" stroke="#222" stroke-width="1.1" stroke-dasharray="2.8 2.06"/><path d="M583 913.5 H624.5" stroke="#222" stroke-width="1.1" stroke-dasharray="2.8 2.06"/><path d="M43 913.5 H83" stroke="#222" stroke-width="1.1"/><path d="M882.5 785 V842" stroke="#00979d" stroke-width="5.6" stroke-linecap="round"/><path d="M872.2 839 H893 L882.6 860 Z" fill="#00979d" stroke="#00979d" stroke-width="0.8" stroke-linejoin="round"/></svg>
</body></html>
